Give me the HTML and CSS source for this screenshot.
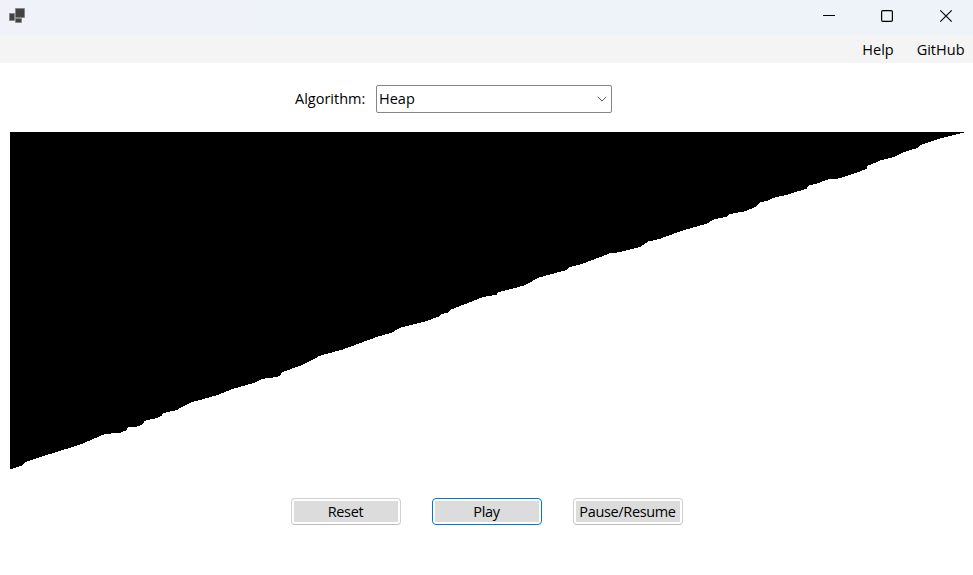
FILE: index.html
```html
<!DOCTYPE html>
<html lang="en">
<head>
<meta charset="utf-8">
<title>Sorting</title>
<link rel="stylesheet" href="styles.css">
</head>
<body>
<header class="titlebar">
  <svg class="app-icon" width="16" height="16" viewBox="0 0 16 16" fill="#424242" stroke="#808284" stroke-width=".8"><path d="M.5 5.500h5v7h-5zM6.500.5h9v9h-9zM6.500 10.500h6v4h-6z"/></svg>
  <div class="window-controls">
    <svg width="58" height="32" viewBox="0 0 58 32"><path d="M8 15.500h12" stroke="#000"/></svg>
    <svg width="58" height="32" viewBox="0 0 58 32"><rect x="8.600" y="10.600" width="10.800" height="10.800" rx="1.300" fill="none" stroke="#000" stroke-width="1.200"/></svg>
    <svg width="42" height="32" viewBox="0 0 42 32"><path d="M9.300 10.300l11.400 11.400M20.700 10.300L9.300 21.700" stroke="#000" stroke-width="1.150"/></svg>
  </div>
</header>
<nav class="menu"><span class="help">Help</span><span class="github">GitHub</span></nav>
<main>
  <div class="picker">
    <span class="label">Algorithm:</span>
    <div class="select"><span>Heap</span>
      <svg width="10" height="6" viewBox="0 0 10 6"><path d="M.7.8L5 5.100 9.300.8" fill="none" stroke="#555"/></svg>
    </div>
  </div>
  <svg class="chart" width="955" height="338" viewBox="10 132 955 338" shape-rendering="crispEdges">
    <path d="M10 132H964V132.600L938.300 139 920 145.300 917.700 148 906.700 151 893.300 157.300 881.700 160 867.700 165.700 866.700 168.700 856.700 172.700 840 178.300 826.700 179.700 818.300 183.300 808.300 185.700 806.700 188.700 785 195.300 775 197.300 766.700 201 760 202.500 756 206.700 745 211.300 730 214 726.700 216.700 714.300 219.300 706.700 223.700 683.300 230.300 660 238.700 647.700 241.700 640 247 618.300 252.300 610 253.300 581.700 264 569 267.300 566.700 270 538.300 277.700 525 285.300 498.300 292.300 496.700 294.700 483.300 297 451.700 309.300 447.300 313 441.700 314 438.300 316.700 426.700 321 400 327.700 391.700 332.700 376.700 337 343.300 349.300 320 355.700 303 364.700 282.700 372 280 375.300 276.700 377 261.700 379 255 382.700 233.300 388.700 216.700 395.300 190 402.700 176.700 410 162.700 413.300 161.700 416 156.700 418 144 421 143.300 424 136.700 426.700 128 427.300 126.700 430 120.700 432.700 105 434 80 444.700 50 454 25 462 22.700 465.300 10 469.300Z"/>
  </svg>
  <div class="actions">
    <button class="btn"><span>Reset</span></button>
    <button class="btn focused"><span>Play</span></button>
    <button class="btn"><span>Pause/Resume</span></button>
  </div>
</main>
</body>
</html>
```

FILE: styles.css
```css
* { box-sizing: border-box; }
body {
  margin: 0;
  height: 575px;
  overflow: hidden;
  background: #fff;
  color: #000;
  font: 14.5px/20px "Open Sans", "Noto Sans", sans-serif;
}
.titlebar {
  display: flex;
  justify-content: space-between;
  height: 35px;
  padding-left: 9px;
  background: linear-gradient(90deg, #eff3f9, #edf3f8);
}
.app-icon { margin-top: 8px; }
.window-controls { display: flex; }
.window-controls svg { display: block; }
.menu {
  display: flex;
  justify-content: flex-end;
  gap: 23px;
  height: 28px;
  padding: 5px 8.5px 0 0;
  background: #f4f4f4;
}
.picker {
  display: flex;
  align-items: center;
  height: 28px;
  margin: 22px 0 0 295px;
}
.label { width: 81px; }
.select {
  display: flex;
  align-items: center;
  justify-content: space-between;
  width: 236px;
  height: 28px;
  padding: 0 4px 0 2px;
  border: 1px solid #858585;
  border-radius: 2px;
}
.chart { display: block; margin: 19px 0 0 10px; }
.actions {
  display: flex;
  gap: 31px;
  margin: 28px 0 0 291px;
}
.btn {
  width: 110px;
  height: 27px;
  padding: 2px;
  border: 1px solid #d0d0d0;
  border-bottom-color: #bcbcbc;
  border-radius: 4px;
  background: #fff;
  font: inherit;
  color: inherit;
}
.btn span {
  display: block;
  height: 21px;
  padding-right: 1px;
  line-height: 21px;
  background: #dcdcdc;
  letter-spacing: -0.35px;
  white-space: nowrap;
}
.btn.focused { border-color: #0078d4; }
```
